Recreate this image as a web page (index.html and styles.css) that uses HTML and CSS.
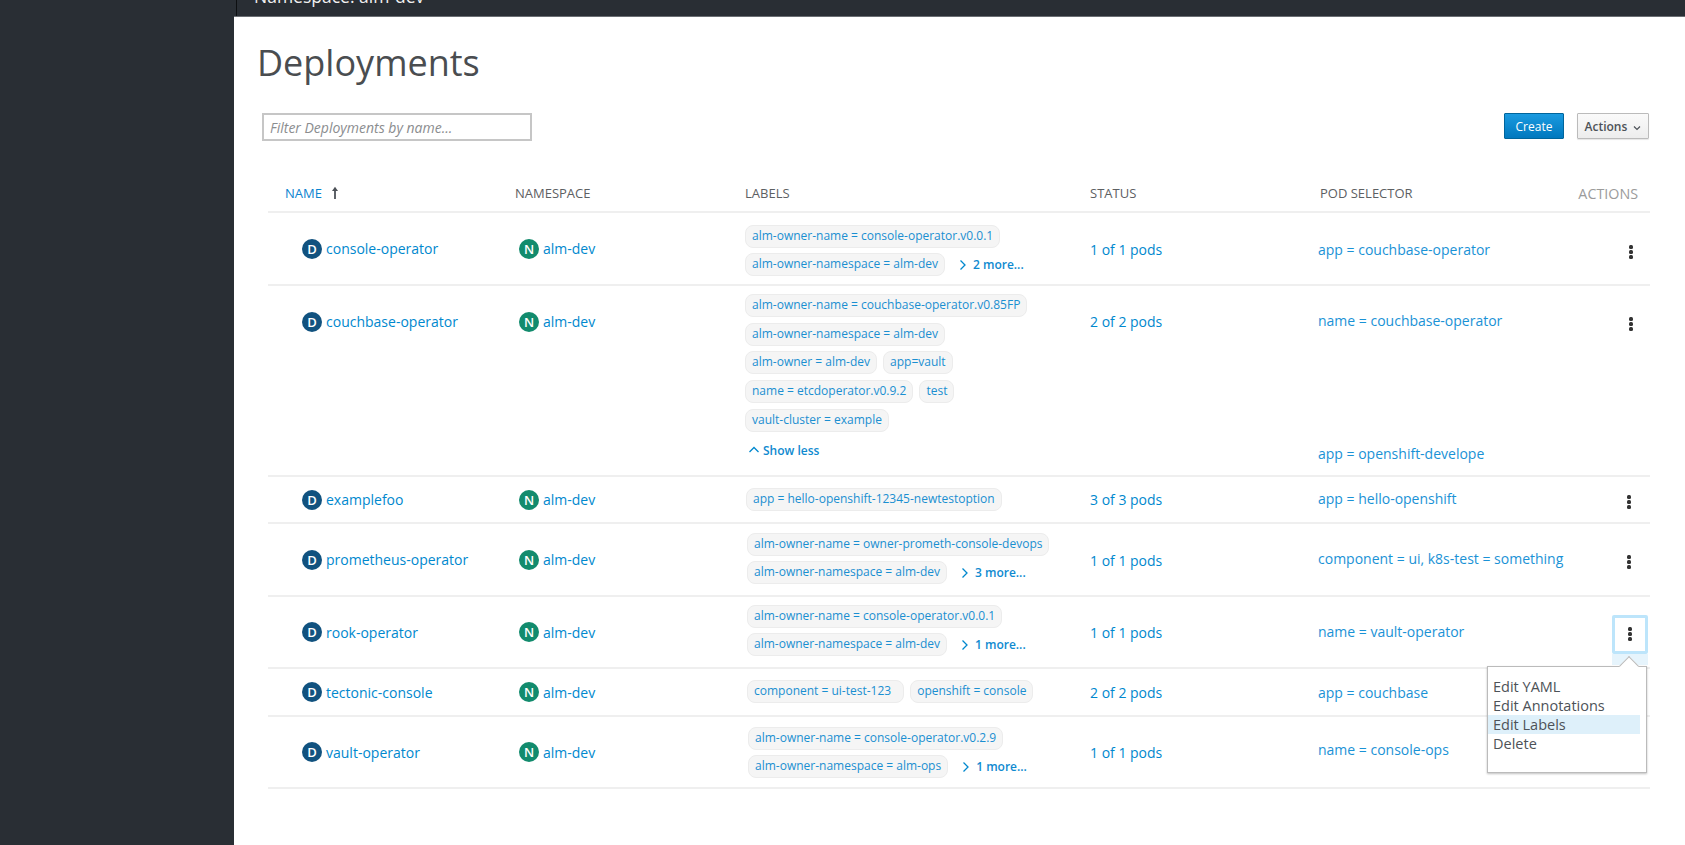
FILE: index.html
```html
<!DOCTYPE html>
<html lang="en">
<head>
    <meta charset="UTF-8">
    <meta name="viewport" content="width=device-width, initial-scale=1.0">
    <title>Deployments</title>
    <link rel="stylesheet" href="styles.css">
</head>
<body>
    <aside class="sidebar"></aside>
    <div class="main">
        <div class="topbar"><span class="topbar-text">Namespace: alm-dev</span></div>
        <div class="content">
            <h1 class="title">Deployments</h1>
            <div class="toolbar">
                <input class="filter" type="text" placeholder="Filter Deployments by name...">
                <div class="toolbar-btns">
                    <button class="btn btn-primary">Create</button>
                    <button class="btn btn-default">Actions
                        <svg class="caret" viewBox="0 0 8 6" width="8" height="6"><path d="M1 1.5 L4 4.5 L7 1.5" fill="none" stroke="#4d5258" stroke-width="1.2"/></svg>
                    </button>
                </div>
            </div>

            <div class="table">
                <div class="row head">
                    <div class="th sorted">NAME
                        <svg class="sort-arrow" viewBox="0 0 8 14" width="8" height="14"><path d="M4 13 V2" fill="none" stroke="#4d5258" stroke-width="1.8"/><path d="M4 0.8 L7 5 H1 Z" fill="#4d5258"/></svg>
                    </div>
                    <div class="th">NAMESPACE</div>
                    <div class="th">LABELS</div>
                    <div class="th">STATUS</div>
                    <div class="th">POD SELECTOR</div>
                    <div class="th th-actions">ACTIONS</div>
                </div>

                <div class="row r1">
                    <div class="cell name"><span class="badge badge-d">D</span><a>console-operator</a></div>
                    <div class="cell ns"><span class="badge badge-n">N</span><a>alm-dev</a></div>
                    <div class="cell labels">
                        <div class="chips"><span class="chip">alm-owner-name = console-operator.v0.0.1</span></div>
                        <div class="chips"><span class="chip">alm-owner-namespace = alm-dev</span><a class="more"><svg class="chev" viewBox="0 0 8 12" width="8" height="12"><path d="M1.5 1.5 L6 6 L1.5 10.5" fill="none" stroke="#0088ce" stroke-width="1.3"/></svg>2 more...</a></div>
                    </div>
                    <div class="cell status"><a>1 of 1 pods</a></div>
                    <div class="cell pods"><a>app = couchbase-operator</a></div>
                    <div class="cell kebab-cell"><button class="kebab"><i></i><i></i><i></i></button></div>
                </div>

                <div class="row r2">
                    <div class="cell name"><span class="badge badge-d">D</span><a>couchbase-operator</a></div>
                    <div class="cell ns"><span class="badge badge-n">N</span><a>alm-dev</a></div>
                    <div class="cell labels">
                        <div class="chips"><span class="chip">alm-owner-name = couchbase-operator.v0.85FP</span></div>
                        <div class="chips"><span class="chip">alm-owner-namespace = alm-dev</span></div>
                        <div class="chips"><span class="chip">alm-owner = alm-dev</span><span class="chip">app=vault</span></div>
                        <div class="chips"><span class="chip">name = etcdoperator.v0.9.2</span><span class="chip">test</span></div>
                        <div class="chips"><span class="chip">vault-cluster = example</span></div>
                        <a class="less"><svg class="chev-up" viewBox="0 0 12 8" width="12" height="8"><path d="M1.5 6 L6 1.5 L10.5 6" fill="none" stroke="#0088ce" stroke-width="1.3"/></svg>Show less</a>
                    </div>
                    <div class="cell status"><a>2 of 2 pods</a></div>
                    <div class="cell pods pods-split"><a>name = couchbase-operator</a><a>app = openshift-develope</a></div>
                    <div class="cell kebab-cell"><button class="kebab"><i></i><i></i><i></i></button></div>
                </div>

                <div class="row r3">
                    <div class="cell name"><span class="badge badge-d">D</span><a>examplefoo</a></div>
                    <div class="cell ns"><span class="badge badge-n">N</span><a>alm-dev</a></div>
                    <div class="cell labels">
                        <div class="chips"><span class="chip">app = hello-openshift-12345-newtestoption</span></div>
                    </div>
                    <div class="cell status"><a>3 of 3 pods</a></div>
                    <div class="cell pods"><a>app = hello-openshift</a></div>
                    <div class="cell kebab-cell"><button class="kebab"><i></i><i></i><i></i></button></div>
                </div>

                <div class="row r4">
                    <div class="cell name"><span class="badge badge-d">D</span><a>prometheus-operator</a></div>
                    <div class="cell ns"><span class="badge badge-n">N</span><a>alm-dev</a></div>
                    <div class="cell labels">
                        <div class="chips"><span class="chip">alm-owner-name = owner-prometh-console-devops</span></div>
                        <div class="chips"><span class="chip">alm-owner-namespace = alm-dev</span><a class="more"><svg class="chev" viewBox="0 0 8 12" width="8" height="12"><path d="M1.5 1.5 L6 6 L1.5 10.5" fill="none" stroke="#0088ce" stroke-width="1.3"/></svg>3 more...</a></div>
                    </div>
                    <div class="cell status"><a>1 of 1 pods</a></div>
                    <div class="cell pods"><a>component = ui, k8s-test = something</a></div>
                    <div class="cell kebab-cell"><button class="kebab"><i></i><i></i><i></i></button></div>
                </div>

                <div class="row r5">
                    <div class="cell name"><span class="badge badge-d">D</span><a>rook-operator</a></div>
                    <div class="cell ns"><span class="badge badge-n">N</span><a>alm-dev</a></div>
                    <div class="cell labels">
                        <div class="chips"><span class="chip">alm-owner-name = console-operator.v0.0.1</span></div>
                        <div class="chips"><span class="chip">alm-owner-namespace = alm-dev</span><a class="more"><svg class="chev" viewBox="0 0 8 12" width="8" height="12"><path d="M1.5 1.5 L6 6 L1.5 10.5" fill="none" stroke="#0088ce" stroke-width="1.3"/></svg>1 more...</a></div>
                    </div>
                    <div class="cell status"><a>1 of 1 pods</a></div>
                    <div class="cell pods"><a>name = vault-operator</a></div>
                    <div class="cell kebab-cell"><button class="kebab kebab-open"><i></i><i></i><i></i></button></div>
                </div>

                <div class="row r6">
                    <div class="cell name"><span class="badge badge-d">D</span><a>tectonic-console</a></div>
                    <div class="cell ns"><span class="badge badge-n">N</span><a>alm-dev</a></div>
                    <div class="cell labels">
                        <div class="chips"><span class="chip chip-wide">component = ui-test-123</span><span class="chip">openshift = console</span></div>
                    </div>
                    <div class="cell status"><a>2 of 2 pods</a></div>
                    <div class="cell pods"><a>app = couchbase</a></div>
                    <div class="cell kebab-cell"></div>
                </div>

                <div class="row r7">
                    <div class="cell name"><span class="badge badge-d">D</span><a>vault-operator</a></div>
                    <div class="cell ns"><span class="badge badge-n">N</span><a>alm-dev</a></div>
                    <div class="cell labels">
                        <div class="chips"><span class="chip">alm-owner-name = console-operator.v0.2.9</span></div>
                        <div class="chips"><span class="chip">alm-owner-namespace = alm-ops</span><a class="more"><svg class="chev" viewBox="0 0 8 12" width="8" height="12"><path d="M1.5 1.5 L6 6 L1.5 10.5" fill="none" stroke="#0088ce" stroke-width="1.3"/></svg>1 more...</a></div>
                    </div>
                    <div class="cell status"><a>1 of 1 pods</a></div>
                    <div class="cell pods"><a>name = console-ops</a></div>
                    <div class="cell kebab-cell"></div>
                </div>

                <div class="menu">
                    <span class="menu-arrow"></span>
                    <a>Edit YAML</a>
                    <a>Edit Annotations</a>
                    <a class="active">Edit Labels</a>
                    <a>Delete</a>
                </div>
            </div>
        </div>
    </div>
</body>
</html>
```

FILE: styles.css
```css
html, body {
    margin: 0;
    height: 100%;
    overflow: hidden;
}
body {
    display: flex;
    font-family: "Open Sans", sans-serif;
    background: #fff;
    color: #4d5258;
}
a {
    color: #0088ce;
}
.sidebar {
    width: 234px;
    flex: none;
    background: #292e34;
}
.main {
    flex: 1;
    min-width: 0;
}
.topbar {
    height: 17px;
    background: linear-gradient(90deg, #292e34 2px, #0d0f11 2px, #0d0f11 3px, #292e34 3px);
    border-bottom: 1px solid #6a6e73;
    box-sizing: border-box;
    overflow: hidden;
}
.topbar-text {
    display: block;
    margin: -13px 0 0 20px;
    color: #f0f0f0;
    font-size: 17.5px;
    line-height: 18px;
}
.content {
    padding: 0 35px 0 23px;
}
.title {
    margin: 0;
    padding-top: 22px;
    font-size: 36px;
    font-weight: 400;
    line-height: 48px;
    color: #4a4d50;
}
.toolbar {
    display: flex;
    justify-content: space-between;
    align-items: flex-start;
    margin-top: 26px;
    padding-left: 5px;
}
.filter {
    width: 270px;
    height: 28px;
    box-sizing: border-box;
    border: 2px solid #c6c6c6;
    padding: 0 6px;
    font-family: "Open Sans", sans-serif;
    font-size: 14px;
    font-style: italic;
    outline: none;
}
.filter::placeholder {
    color: #8b8d8f;
    opacity: 1;
}
.toolbar-btns {
    display: flex;
    gap: 13px;
    margin-right: 1px;
}
.btn {
    height: 26px;
    box-sizing: border-box;
    font-family: "Open Sans", sans-serif;
    font-size: 12px;
    border-radius: 1px;
    padding: 0;
}
.btn-primary {
    width: 60px;
    background: linear-gradient(#1a9ae0, #0078be);
    border: 1px solid #00659c;
    color: #fff;
}
.btn-default {
    width: 72px;
    background: linear-gradient(#fafafa, #ededed);
    border: 1px solid #bbb;
    color: #4d5258;
    font-weight: 600;
    box-shadow: 0 1px 1px rgba(0,0,0,.1);
}
.caret {
    margin-left: 3px;
}
.table {
    position: relative;
    margin: 16px 0 0 11px;
}
.row {
    display: grid;
    grid-template-columns: 247px 230px 345px 230px 1fr 60px;
    border-bottom: 2px solid #efefef;
    box-sizing: border-box;
}
.head {
    height: 56px;
    align-items: center;
}
.th {
    font-size: 13px;
    color: #5d6063;
    padding-top: 18px;
}
.th:first-child {
    padding-left: 17px;
}
.sorted {
    color: #0a84d0;
    display: flex;
    align-items: center;
}
.sort-arrow {
    margin-left: 9px;
}
.th-actions {
    color: #9b9b9b;
    font-size: 14.3px;
    text-align: right;
    padding-right: 12px;
    margin-left: -30px;
}
.cell {
    display: flex;
    align-items: center;
    font-size: 14px;
}
.name {
    padding-left: 34px;
}
.ns {
    margin-left: 4px;
}
.badge {
    flex: none;
    width: 20px;
    height: 20px;
    border-radius: 50%;
    margin-right: 4px;
    color: #fff;
    font-size: 13px;
    font-weight: 600;
    text-align: center;
    line-height: 20px;
}
.badge-d {
    background: #11527f;
}
.badge-n {
    background: #128b6d;
}
.labels {
    display: block;
}
.chips {
    display: flex;
    align-items: center;
    gap: 6px;
    margin-bottom: 5px;
}
.chip {
    height: 23px;
    box-sizing: border-box;
    padding: 0 6px;
    background: #f5f5f5;
    border: 1px solid #ececec;
    border-radius: 8px;
    color: #1a8fd1;
    font-size: 12px;
    line-height: 20px;
    white-space: nowrap;
}
.chip-wide {
    padding-right: 12px;
}
.more {
    display: flex;
    align-items: center;
    margin-left: 8px;
    font-size: 12px;
    font-weight: 600;
    color: #0f8ad0;
}
.chev {
    margin-right: 6px;
}
.less {
    display: flex;
    align-items: center;
    margin: 10px 0 0 3px;
    font-size: 12px;
    font-weight: 600;
    color: #0f8ad0;
}
.chev-up {
    margin-right: 3px;
}
.pods {
    margin-left: -2px;
}
.pods a {
    color: #1a92d6;
}
.pods-split {
    flex-direction: column;
    align-items: flex-start;
    justify-content: space-between;
}
.kebab-cell {
    justify-content: flex-end;
    padding-right: 13px;
}
.kebab {
    position: relative;
    display: flex;
    flex-direction: column;
    align-items: center;
    gap: 1px;
    width: 12px;
    padding: 0;
    background: none;
    border: 0;
}
.kebab i {
    width: 4px;
    height: 4px;
    border-radius: 1.5px;
    background: #333;
}
.kebab-open {
    width: 36px;
    height: 39px;
    justify-content: center;
    box-sizing: border-box;
    border: 3px solid #bde5fb;
    border-radius: 2px;
    background: #fff;
}
.kebab-open::after {
    content: "";
    position: absolute;
    left: -3px;
    right: -3px;
    top: 36px;
    height: 11px;
    background: #e6f4fc;
}

/* row heights and the small offsets each row has */
.r1 { height: 73px; }
.r2 { height: 191px; }
.r3 { height: 47px; }
.r4 { height: 73px; }
.r5 { height: 72px; }
.r6 { height: 48px; }
.r7 { height: 72px; }
.r1 .labels { padding-top: 12px; }
.r2 .labels { padding-top: 8px; }
.r2 .chips { margin-bottom: 5.7px; }
.r3 .labels { padding-top: 11px; padding-left: 1px; }
.r4 .labels { padding-top: 9px; padding-left: 2px; }
.r5 .labels { padding-top: 8px; padding-left: 2px; }
.r6 .labels { padding-top: 11px; padding-left: 2px; }
.r7 .labels { padding-top: 10px; padding-left: 3px; }
.r2 .name, .r2 .ns, .r2 .status { align-items: flex-start; padding-top: 26px; }
.r2 .pods { padding: 25px 0 12px; }
.r1 .status, .r1 .pods, .r4 .status { padding-top: 2px; }
.r3 .pods, .r4 .pods, .r5 .pods { padding-bottom: 2px; }
.r7 .pods { padding-bottom: 6px; }
.r1 .kebab-cell { padding-top: 6px; }
.r2 .kebab-cell { align-items: flex-start; padding-top: 31px; }
.r3 .kebab-cell, .r4 .kebab-cell { padding: 4px 15px 0 0; }
.r5 .kebab-cell { padding: 4px 2px 0 0; }

.menu {
    position: absolute;
    right: 3px;
    top: 509px;
    width: 160px;
    height: 107px;
    box-sizing: border-box;
    padding: 10px 6px 0 0;
    background: #fff;
    border: 1px solid #bbb;
    box-shadow: 0 1px 2px rgba(0,0,0,.25);
    font-size: 14.5px;
    line-height: 19px;
}
.menu a {
    display: block;
    padding-left: 5px;
    color: #4d5258;
}
.menu a.active {
    background: #def0fa;
}
.menu-arrow {
    position: absolute;
    top: -8px;
    right: 10px;
    width: 14px;
    height: 14px;
    box-sizing: border-box;
    background: #fff;
    border-top: 1px solid #bbb;
    border-left: 1px solid #bbb;
    transform: rotate(45deg);
}
```
